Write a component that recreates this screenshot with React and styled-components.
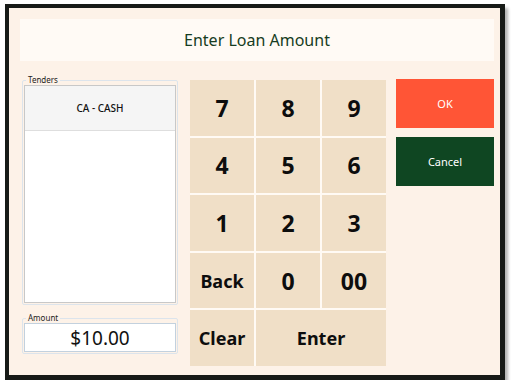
import React from 'react';
import styled, { createGlobalStyle } from 'styled-components';

const GlobalStyle = createGlobalStyle`
	html, body {
		margin: 0;
		padding: 0;
		background: #ffffff;
	}
	body {
		font-family: 'Noto Sans', 'Open Sans', sans-serif;
	}
`;

const keys = [
	{ label: '7' },
	{ label: '8' },
	{ label: '9' },
	{ label: '4' },
	{ label: '5' },
	{ label: '6' },
	{ label: '1' },
	{ label: '2' },
	{ label: '3' },
	{ label: 'Back', word: true },
	{ label: '0' },
	{ label: '00' },
	{ label: 'Clear', word: true },
	{ label: 'Enter', word: true, span: 2 },
];

const App = () => {
	return (
		<>
			<GlobalStyle />
			<Frame>
				<TitleBar>Enter Loan Amount</TitleBar>
				<Body>
					<LeftColumn>
						<Group>
							<Legend>Tenders</Legend>
							<TenderList>
								<TenderItem>CA - CASH</TenderItem>
							</TenderList>
						</Group>
						<Group>
							<Legend>Amount</Legend>
							<AmountBox>$10.00</AmountBox>
						</Group>
					</LeftColumn>
					<Keypad>
						{keys.map((key) => (
							<Key key={key.label} $word={key.word} $span={key.span}>
								{key.label}
							</Key>
						))}
					</Keypad>
					<Actions>
						<ActionButton $bg="#ff5536">OK</ActionButton>
						<ActionButton $bg="#0f4622">Cancel</ActionButton>
					</Actions>
				</Body>
			</Frame>
		</>
	);
};

export default App;

const Frame = styled.div`
	margin: 4px 0 0 5px;
	width: 491px;
	height: 367px;
	box-sizing: content-box;
	border: 4px solid #171a17;
	border-right-width: 5px;
	border-bottom-width: 5px;
	background: #fdf2e8;
	box-shadow: 3px 4px 3px rgba(0, 0, 0, 0.3);
	display: flex;
	flex-direction: column;
`;

const TitleBar = styled.div`
	margin: 11px 6px 0 11px;
	height: 42px;
	background: #fffaf5;
	display: flex;
	align-items: center;
	justify-content: center;
	color: #163c22;
	font-size: 16px;
`;

const Body = styled.div`
	display: flex;
	margin: 17px 6px 0 13px;
	align-items: flex-start;
`;

const LeftColumn = styled.div`
	margin-top: -3px;
	width: 156px;
	display: flex;
	flex-direction: column;
	gap: 8px;
`;

const Group = styled.fieldset`
	margin: 0;
	padding: 0 1px 1px;
	border: 1px solid #dce4ec;
	border-radius: 2px;
	min-width: 0;
`;

const Legend = styled.legend`
	font-size: 8px;
	line-height: 10px;
	color: #222;
	padding: 0 2px;
	margin-left: 2px;
`;

const TenderList = styled.div`
	height: 216px;
	background: #ffffff;
	border: 1px solid #c8c8c8;
`;

const TenderItem = styled.div`
	height: 44px;
	background: #f5f5f5;
	border-bottom: 1px solid #dedede;
	display: flex;
	align-items: center;
	justify-content: center;
	font-size: 10px;
	font-weight: 500;
	color: #111;
`;

const AmountBox = styled.div`
	height: 27px;
	background: #ffffff;
	border: 1px solid #c3d1de;
	display: flex;
	align-items: center;
	justify-content: center;
	font-size: 19px;
	color: #111;
`;

const Keypad = styled.div`
	margin: 2px 0 0 12px;
	width: 196px;
	height: 286px;
	display: grid;
	grid-template-columns: repeat(3, 1fr);
	grid-template-rows: repeat(5, 1fr);
	gap: 2px;
	background: #fffaf4;
`;

const Key = styled.div`
	grid-column: span ${(p) => p.$span || 1};
	background: #f0dfc7;
	display: flex;
	align-items: center;
	justify-content: center;
	font-weight: 700;
	font-size: ${(p) => (p.$word ? '18px' : '23px')};
	color: #0d0d0d;
`;

const Actions = styled.div`
	margin: 1px 0 0 10px;
	width: 98px;
	display: flex;
	flex-direction: column;
	gap: 9px;
`;

const ActionButton = styled.div`
	height: 49px;
	background: ${(p) => p.$bg};
	color: #ffffff;
	font-size: 11px;
	display: flex;
	align-items: center;
	justify-content: center;
`;
